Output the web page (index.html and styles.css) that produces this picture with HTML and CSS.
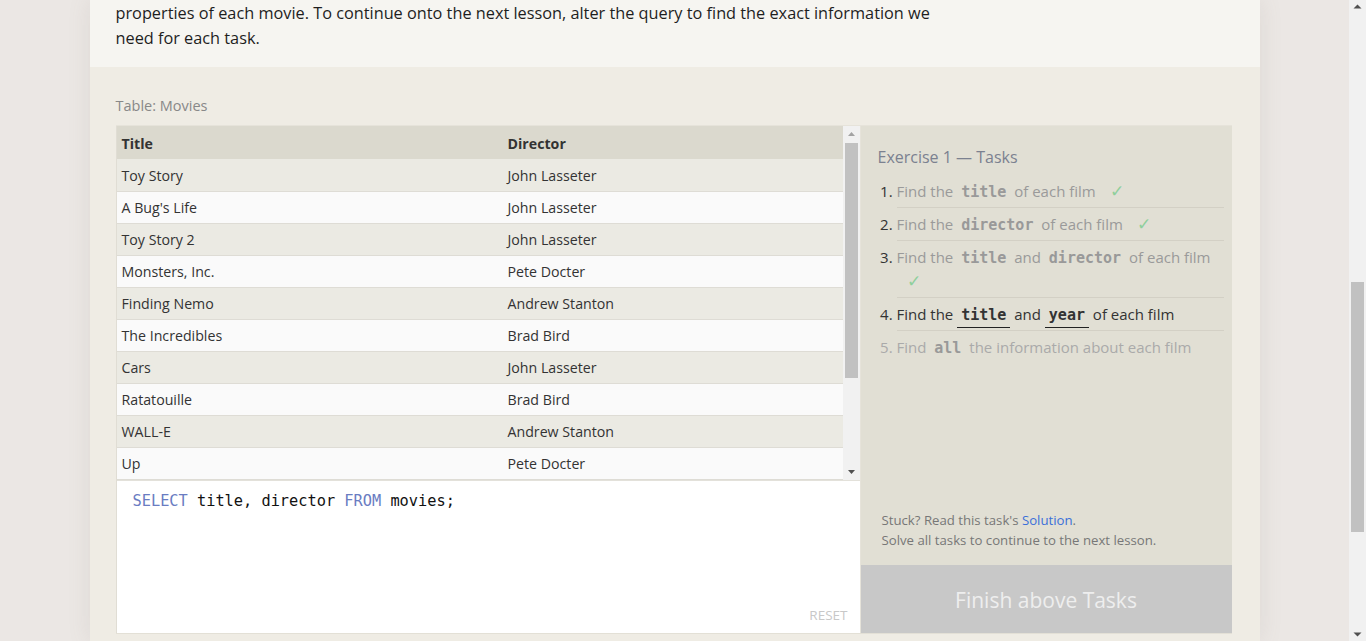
FILE: index.html
```html
<!DOCTYPE html>
<html lang="en">
<head>
<meta charset="utf-8">
<title>SQL Lesson 2: Queries</title>
<link rel="stylesheet" href="styles.css">
</head>
<body>
<div class="screen">
  <div class="viewport">
    <main class="column">
      <section class="intro">
        <p>properties of each movie. To continue onto the next lesson, alter the query to find the exact information we need for each task.</p>
      </section>
      <section class="exercise">
        <div class="table-label">Table: Movies</div>
        <div class="exercise-box">
          <div class="work">
            <div class="table-wrap">
              <div class="table-scroll">
                <table class="movies">
                  <thead>
                    <tr><th class="col-title">Title</th><th>Director</th></tr>
                  </thead>
                  <tbody>
                    <tr><td>Toy Story</td><td>John Lasseter</td></tr>
                    <tr><td>A Bug's Life</td><td>John Lasseter</td></tr>
                    <tr><td>Toy Story 2</td><td>John Lasseter</td></tr>
                    <tr><td>Monsters, Inc.</td><td>Pete Docter</td></tr>
                    <tr><td>Finding Nemo</td><td>Andrew Stanton</td></tr>
                    <tr><td>The Incredibles</td><td>Brad Bird</td></tr>
                    <tr><td>Cars</td><td>John Lasseter</td></tr>
                    <tr><td>Ratatouille</td><td>Brad Bird</td></tr>
                    <tr><td>WALL-E</td><td>Andrew Stanton</td></tr>
                    <tr><td>Up</td><td>Pete Docter</td></tr>
                  </tbody>
                </table>
              </div>
              <div class="scrollbar table-bar">
                <svg class="arrow" width="17" height="17" viewBox="0 0 17 17"><path d="M5 10h7l-3.5-4z" fill="#a3a3a3"/></svg>
                <div class="track">
                  <div class="thumb table-thumb"></div>
                </div>
                <svg class="arrow" width="17" height="17" viewBox="0 0 17 17"><path d="M5 7h7l-3.5 4z" fill="#505050"/></svg>
              </div>
            </div>
            <div class="editor">
              <pre class="code"><span class="kw">SELECT</span> title, director <span class="kw">FROM</span> movies;</pre>
              <span class="reset">RESET</span>
            </div>
          </div>
          <aside class="tasks-panel">
            <div class="tasks">
              <h3 class="tasks-title">Exercise 1 — Tasks</h3>
              <ol class="task-list">
                <li class="done">Find the <code>title</code> of each film <span class="check">✓</span></li>
                <li class="done">Find the <code>director</code> of each film <span class="check">✓</span></li>
                <li class="done">Find the <code>title</code> and <code>director</code> of each film <span class="check">✓</span></li>
                <li class="current">Find the <code>title</code> and <code>year</code> of each film</li>
                <li class="todo">Find <code>all</code> the information about each film</li>
              </ol>
            </div>
            <div class="stuck">
              <div>Stuck? Read this task's <a href="#" class="solution">Solution</a>.</div>
              <div>Solve all tasks to continue to the next lesson.</div>
            </div>
            <div class="finish">Finish above Tasks</div>
          </aside>
        </div>
      </section>
    </main>
  </div>
  <div class="scrollbar page-bar">
    <svg class="arrow" width="17" height="17" viewBox="0 0 17 17"><path d="M4.5 8.5h8l-4-4z" fill="#505050"/></svg>
    <div class="track page-track">
      <div class="thumb page-thumb"></div>
    </div>
    <svg class="arrow" width="17" height="17" viewBox="0 0 17 17"><path d="M4.5 8.5h8l-4 4z" fill="#505050"/></svg>
  </div>
</div>
</body>
</html>
```
FILE: styles.css
```css
* { box-sizing: border-box; }

html, body {
  margin: 0;
  padding: 0;
  height: 100%;
  overflow: hidden;
}

body {
  font-family: "Open Sans", "Noto Sans", sans-serif;
  color: #222;
  background: #ebe7e4;
}

.screen {
  display: flex;
  height: 641px;
}

.viewport {
  flex: 1;
  overflow: hidden;
  display: flex;
  justify-content: center;
}

.column {
  width: 1170px;
  flex: none;
  background: #efece4;
  box-shadow: 0 0 22px rgba(120, 110, 100, 0.12);
  height: 641px;
}

/* intro text */
.intro {
  background: #f6f5f1;
  padding: 1px 26px 16px 26px;
  height: 67px;
}

.intro p {
  margin: 0;
  width: 830px;
  font-size: 16.3px;
  line-height: 25px;
  color: #1e1e1e;
}

/* exercise */
.exercise {
  padding: 26px 28px 0 26px;
}

.table-label {
  font-size: 14.5px;
  line-height: 24px;
  color: #888;
  margin-bottom: 7px;
  padding-top: 1px;
  height: 25px;
}

.exercise-box {
  display: flex;
  height: 509px;
  border-top: 1px solid #e6e3da;
  border-bottom: 1px solid #e3e0d6;
}

.work {
  width: 744px;
  display: flex;
  flex-direction: column;
  border-left: 1px solid #e0ddd4;
}

.table-wrap {
  display: flex;
  height: 355px;
  border-bottom: 1px solid #e3e1da;
}

.table-scroll {
  flex: 1;
  overflow: hidden;
}

.movies {
  width: 100%;
  border-collapse: collapse;
  font-size: 14.2px;
  color: #333;
}

.movies th {
  text-align: left;
  background: #dbd9ce;
  font-weight: 700;
  height: 33px;
  padding: 1px 5px 0 5px;
}

.movies th.col-title {
  width: 386px;
}

.movies td {
  height: 32px;
  padding: 1px 5px 0 5px;
  border-bottom: 1px solid #dedcd5;
}

.movies tbody tr:nth-child(odd) td {
  background: #ebeae3;
}

.movies tbody tr:nth-child(even) td {
  background: #fafafa;
}

/* fake scrollbars */
.scrollbar {
  width: 17px;
  flex: none;
  background: #f1f1f1;
  display: flex;
  flex-direction: column;
}

.scrollbar .arrow {
  display: block;
  flex: none;
}

.track {
  flex: 1;
}

.thumb {
  background: #c1c1c1;
  margin: 0 2px;
}

.table-thumb {
  height: 235px;
}

.page-bar {
  height: 641px;
}

.page-thumb {
  margin-top: 265px;
  height: 250px;
}

/* editor */
.editor {
  flex: 1;
  background: #fff;
  display: flex;
  flex-direction: column;
  padding: 10px 12px 9px 16px;
}

.code {
  flex: 1;
  margin: 0;
  font-family: "DejaVu Sans Mono", "Liberation Mono", monospace;
  font-size: 15.3px;
  line-height: 20px;
  color: #111;
}

.code .kw {
  color: #6a7cc2;
}

.reset {
  align-self: flex-end;
  font-size: 13.5px;
  line-height: 18px;
  color: #c8c8c8;
}

/* tasks panel */
.tasks-panel {
  width: 372px;
  display: flex;
  flex-direction: column;
  background: #e1dfd4;
  border-left: 1px solid #e6e3da;
}

.tasks {
  flex: 1;
  padding: 19px 8px 0 17px;
}

.tasks-title {
  margin: 0 0 6px 0;
  font-size: 16px;
  font-weight: 400;
  line-height: 24px;
  color: #7b8190;
}

.task-list {
  margin: 0;
  padding-left: 19px;
  font-size: 15px;
  line-height: 24px;
}

.task-list li {
  padding: 4px 0 4px 0;
  border-bottom: 1px solid #d3d0c5;
  color: #333;
}

.task-list li:last-child {
  border-bottom: none;
}

.task-list li.done {
  color: #9a9a9a;
}

.task-list li.done::marker,
.task-list li.current::marker {
  color: #333;
}

.task-list li.todo {
  color: #aaa;
}

.task-list code {
  font-family: "DejaVu Sans Mono", "Liberation Mono", monospace;
  font-weight: 700;
  font-size: 15px;
  line-height: 1;
  padding: 0 4px;
}

.task-list li.done code,
.task-list li.todo code {
  color: #999;
}

.task-list li.current code {
  color: #333;
  border-bottom: 1px solid #222;
  padding-bottom: 3px;
}

.check {
  color: #8fcf9c;
  font-size: 17px;
  line-height: 1;
  margin-left: 10px;
}

.stuck {
  padding: 0 12px 15px 21px;
  font-size: 13.2px;
  line-height: 20px;
  color: #777;
}

.solution {
  color: #3b6fd9;
  text-decoration: none;
}

.finish {
  height: 68px;
  background: #c8c8c8;
  color: #eeeeee;
  font-size: 21px;
  padding-top: 1px;
  display: flex;
  align-items: center;
  justify-content: center;
}
```
